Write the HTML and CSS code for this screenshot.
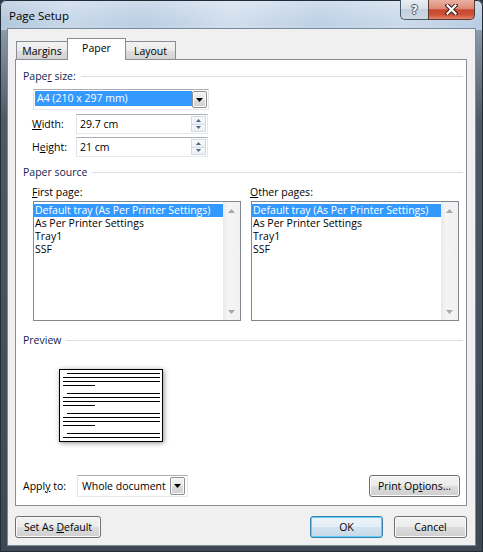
FILE: index.html
```html
<!DOCTYPE html>
<html lang="en">
<head>
<meta charset="utf-8">
<title>Page Setup</title>
<link rel="stylesheet" href="styles.css">
</head>
<body>
<div class="window">
  <div class="titlebar">
    <span class="title">Page Setup</span>
    <div class="caption-btns">
      <div class="cbtn help"><span class="qmark">?</span></div>
      <div class="cbtn close">
        <svg width="13" height="11" viewBox="0 0 13 11"><path d="M2.5 1.5 L10.5 9.5 M10.5 1.5 L2.5 9.5" stroke="#3b1f1a" stroke-width="4.2" stroke-linecap="square" fill="none"/><path d="M2.5 1.5 L10.5 9.5 M10.5 1.5 L2.5 9.5" stroke="#ffffff" stroke-width="2.2" stroke-linecap="square" fill="none"/></svg>
      </div>
    </div>
  </div>
  <div class="client">
    <div class="tabs">
      <div class="tab first">Margins</div>
      <div class="tab active">Paper</div>
      <div class="tab last">Layout</div>
    </div>
    <div class="panel">
      <div class="group-head"><span>Pape<u>r</u> size:</span><i class="rule"></i></div>
      <div class="size-block">
        <div class="combo size-combo">
          <span class="combo-value selected">A4 (210 x 297 mm)</span>
          <span class="dd-btn"><svg width="7" height="4" viewBox="0 0 7 4"><polygon points="0,0 7,0 3.5,4" fill="#000"/></svg></span>
        </div>
        <div class="field-row">
          <span class="field-label"><u>W</u>idth:</span>
          <div class="spin-box">
            <span class="spin-value">29.7 cm</span>
            <span class="spin-btns">
              <span class="spin-half"><svg width="5" height="3" viewBox="0 0 5 3"><polygon points="0,3 5,3 2.5,0" fill="#4d6489"/></svg></span>
              <span class="spin-half"><svg width="5" height="3" viewBox="0 0 5 3"><polygon points="0,0 5,0 2.5,3" fill="#4d6489"/></svg></span>
            </span>
          </div>
        </div>
        <div class="field-row second">
          <span class="field-label">H<u>e</u>ight:</span>
          <div class="spin-box">
            <span class="spin-value">21 cm</span>
            <span class="spin-btns">
              <span class="spin-half"><svg width="5" height="3" viewBox="0 0 5 3"><polygon points="0,3 5,3 2.5,0" fill="#4d6489"/></svg></span>
              <span class="spin-half"><svg width="5" height="3" viewBox="0 0 5 3"><polygon points="0,0 5,0 2.5,3" fill="#4d6489"/></svg></span>
            </span>
          </div>
        </div>
      </div>

      <div class="group-head source-head"><span>Paper source</span><i class="rule"></i></div>
      <div class="sources">
        <div class="source-col">
          <span class="list-label"><u>F</u>irst page:</span>
          <div class="listbox">
            <div class="list-items">
              <div class="item selected">Default tray (As Per Printer Settings)</div>
              <div class="item">As Per Printer Settings</div>
              <div class="item">Tray1</div>
              <div class="item">SSF</div>
            </div>
            <div class="vscroll">
              <span class="sarrow"><svg width="7" height="4" viewBox="0 0 7 4"><polygon points="0,4 7,4 3.5,0" fill="#a7a7a7"/></svg></span>
              <span class="sarrow"><svg width="7" height="4" viewBox="0 0 7 4"><polygon points="0,0 7,0 3.5,4" fill="#a7a7a7"/></svg></span>
            </div>
          </div>
        </div>
        <div class="source-col">
          <span class="list-label"><u>O</u>ther pages:</span>
          <div class="listbox">
            <div class="list-items">
              <div class="item selected">Default tray (As Per Printer Settings)</div>
              <div class="item">As Per Printer Settings</div>
              <div class="item">Tray1</div>
              <div class="item">SSF</div>
            </div>
            <div class="vscroll">
              <span class="sarrow"><svg width="7" height="4" viewBox="0 0 7 4"><polygon points="0,4 7,4 3.5,0" fill="#a7a7a7"/></svg></span>
              <span class="sarrow"><svg width="7" height="4" viewBox="0 0 7 4"><polygon points="0,0 7,0 3.5,4" fill="#a7a7a7"/></svg></span>
            </div>
          </div>
        </div>
      </div>

      <div class="group-head preview-head"><span>Preview</span><i class="rule"></i></div>
      <div class="preview-page">
        <div class="para"><i class="ln indent"></i><i class="ln"></i><i class="ln"></i><i class="ln short"></i></div>
        <div class="para"><i class="ln indent"></i><i class="ln"></i><i class="ln"></i><i class="ln short"></i></div>
        <div class="para"><i class="ln indent"></i><i class="ln"></i><i class="ln"></i><i class="ln short"></i></div>
        <div class="para"><i class="ln indent"></i><i class="ln"></i></div>
      </div>

      <div class="apply-row">
        <span class="apply-label">Appl<u>y</u> to:</span>
        <div class="combo apply-combo">
          <span class="combo-value">Whole document</span>
          <span class="dd-btn"><svg width="7" height="4" viewBox="0 0 7 4"><polygon points="0,0 7,0 3.5,4" fill="#000"/></svg></span>
        </div>
        <button class="btn print-btn"><span>Print Op<u>t</u>ions...</span></button>
      </div>
    </div>
    <div class="footer">
      <button class="btn default-btn"><span>Set As <u>D</u>efault</span></button>
      <div class="footer-right">
        <button class="btn ok-btn"><span>OK</span></button>
        <button class="btn"><span>Cancel</span></button>
      </div>
    </div>
  </div>
</div>
</body>
</html>
```

FILE: styles.css
```css
* { box-sizing: border-box; margin: 0; padding: 0; }
html, body { width: 483px; height: 552px; overflow: hidden; background: #2b3642; }
body {
  font-family: "Open Sans", "Liberation Sans", sans-serif;
  font-size: 10.5px;
  color: #000;
}
u { text-decoration: underline; text-underline-offset: 1px; }

.window {
  width: 483px;
  height: 552px;
  display: flex;
  flex-direction: column;
  padding: 0 8px 7px 8px;
  border-radius: 6px 6px 0 0;
  background:
    linear-gradient(180deg, rgba(255,255,255,0.28), rgba(255,255,255,0) 70%) top left / 100% 30px no-repeat,
    linear-gradient(90deg, #b3c7dc 0%, #c8d8ea 14%, #bccfe4 30%, #d2dfee 48%, #bfd2e6 66%, #ccdbeb 84%, #b9cde2 100%) top left / 100% 30px no-repeat,
    linear-gradient(180deg, #a9bacb 0px, #7f8e9d 45px, #4d5965 120px, #3d4854 100%);
  box-shadow: inset 0 0 0 1px #222c36;
}

.titlebar {
  height: 29px;
  display: flex;
  justify-content: space-between;
  align-items: flex-start;
  flex-shrink: 0;
}
.title {
  margin-top: 8px;
  margin-left: 1px;
  font-size: 11.5px;
  line-height: 16px;
  color: #000;
}
.caption-btns { display: flex; }
.cbtn {
  height: 20px;
  display: flex;
  align-items: center;
  justify-content: center;
  border: 1px solid #4a5a6b;
  border-top: none;
}
.help {
  width: 28px;
  border-right: none;
  border-radius: 0 0 0 5px;
  background: linear-gradient(180deg, #e7edf3 0%, #d8e1ea 45%, #c3cfdb 50%, #cdd8e3 100%);
}
.qmark {
  font-family: "DejaVu Sans", sans-serif;
  font-weight: bold;
  font-size: 12px;
  line-height: 12px;
  color: #f4f6f8;
  text-shadow: 1px 0 0 #4b5866, -1px 0 0 #4b5866, 0 1px 0 #4b5866, 0 -1px 0 #4b5866;
}
.close {
  width: 47px;
  border-color: #5a3a34;
  border-radius: 0 0 5px 0;
  background: linear-gradient(180deg, #eab0a2 0%, #dc8a77 45%, #c8462f 52%, #cf5138 78%, #e58666 100%);
}

.client {
  flex: 1;
  display: flex;
  flex-direction: column;
  background: #f0f0f0;
  padding: 9px 8px 7px 7px;
  box-shadow: 0 0 0 1px #7c8a98;
}

.tabs {
  display: flex;
  align-items: flex-end;
  height: 21px;
  padding-left: 1px;
  position: relative;
  z-index: 2;
}
.tab {
  height: 18px;
  border: 1px solid #898c95;
  border-bottom: none;
  background: linear-gradient(180deg, #f3f3f3 0%, #ebebeb 50%, #dedede 51%, #d3d3d3 100%);
  display: flex;
  align-items: center;
  justify-content: center;
  line-height: 14px;
}
.tab.first { width: 52px; }
.tab.active {
  width: 59px;
  height: 22px;
  margin: 0 -1px -1px -1px;
  background: #fff;
  position: relative;
  z-index: 3;
  padding-bottom: 3px;
}
.tab.last { width: 51px; }

.panel {
  width: 452px;
  height: 447px;
  border: 1px solid #898c95;
  background: #fff;
  padding: 8px 3px 8px 7px;
  display: flex;
  flex-direction: column;
  position: relative;
  z-index: 1;
}

.group-head {
  display: flex;
  align-items: center;
  height: 16px;
  line-height: 16px;
  color: #131c52;
  white-space: nowrap;
}
.rule {
  flex: 1;
  height: 1px;
  margin-left: 5px;
  background: #d5dfe5;
}

.size-block {
  margin-left: 10px;
  margin-top: 5px;
  display: flex;
  flex-direction: column;
}

.combo {
  display: flex;
  align-items: stretch;
  border: 1px solid #abadb3;
  border-right-color: #e3e9ef;
  border-bottom-color: #e3e9ef;
  border-left-color: #e2e3ea;
  background: #fff;
  padding: 1px;
}
.size-combo { width: 176px; height: 21px; }
.combo-value {
  flex: 1;
  line-height: 15px;
  padding-left: 2px;
  white-space: nowrap;
}
.combo-value.selected {
  background: #3399ff;
  color: #fff;
  margin-bottom: 2px;
}
.dd-btn {
  width: 15px;
  display: flex;
  align-items: center;
  justify-content: center;
  border: 1px solid #8e8f8f;
  border-radius: 2px;
  background: linear-gradient(180deg, #f2f2f2 0%, #ebebeb 50%, #dddddd 51%, #cfcfcf 100%);
  box-shadow: inset 0 0 0 1px #fbfbfb;
}

.field-row {
  display: flex;
  align-items: center;
  margin-top: 4px;
}
.field-row.second { margin-top: 3px; }
.field-label { width: 44px; margin-left: -1px; padding-right: 1px; }
.spin-box {
  width: 132px;
  height: 20px;
  display: flex;
  border: 1px solid #abadb3;
  border-right-color: #e3e9ef;
  border-bottom-color: #e3e9ef;
  border-left-color: #e2e3ea;
  background: #fff;
  padding: 1px;
}
.spin-value { flex: 1; line-height: 16px; padding-left: 2px; }
.spin-btns {
  width: 15px;
  display: flex;
  flex-direction: column;
}
.spin-half {
  flex: 1;
  display: flex;
  align-items: center;
  justify-content: center;
  border: 1px solid #d4dae2;
  background: linear-gradient(180deg, #f8f9fb, #eceff3);
}
.spin-half + .spin-half { border-top: none; }

.source-head { margin-top: 7px; }
.sources {
  display: flex;
  gap: 10px;
  margin-left: 10px;
  margin-top: 4px;
}
.source-col { display: flex; flex-direction: column; width: 208px; }
.list-label { line-height: 16px; margin-left: -1px; }
.listbox {
  margin-top: 1px;
  height: 120px;
  border: 1px solid #828790;
  display: flex;
  background: #fff;
}
.list-items { flex: 1; padding-top: 2px; overflow: hidden; }
.item {
  height: 13px;
  line-height: 13px;
  padding-left: 1px;
  white-space: nowrap;
}
.item.selected { background: #3399ff; color: #fff; }
.vscroll {
  width: 17px;
  display: flex;
  flex-direction: column;
  justify-content: space-between;
  background: linear-gradient(90deg, #e9e9e9, #f4f4f4 30%, #f1f1f1);
}
.sarrow {
  height: 17px;
  display: flex;
  align-items: center;
  justify-content: center;
}

.preview-head { margin-top: 11px; }
.preview-page {
  width: 104px;
  height: 73px;
  margin-left: 36px;
  margin-top: 21px;
  border: 1px solid #000;
  background: #fff;
  box-shadow: 1px 1px 5px rgba(0,0,0,0.45);
  padding: 3px 2px 0 3px;
  display: flex;
  flex-direction: column;
  gap: 7px;
}
.para { display: flex; flex-direction: column; gap: 3px; }
.ln { display: block; height: 1px; background: #000; }
.ln.indent { margin-left: 4px; }
.ln.short { width: 32px; }

.apply-row {
  margin-top: auto;
  height: 22px;
  display: flex;
  align-items: center;
}
.apply-label { width: 54px; }
.apply-combo { width: 111px; height: 22px; padding: 1px 2px 1px 1px; }
.apply-combo .combo-value { line-height: 18px; padding-left: 3px; }
.apply-combo .dd-btn { width: 15px; }

.btn {
  font-family: inherit;
  font-size: inherit;
  color: #000;
  height: 22px;
  border: 1px solid #707070;
  border-radius: 3px;
  background: linear-gradient(180deg, #f2f2f2 0%, #ebebeb 50%, #dddddd 51%, #cfcfcf 100%);
  box-shadow: inset 0 0 0 1px #fbfbfb;
  display: flex;
  align-items: center;
  justify-content: center;
  width: 73px;
  line-height: 14px;
  white-space: nowrap;
}
.print-btn { width: 91px; margin-left: auto; margin-right: 3px; height: 22px; }

.footer {
  margin-top: 10px;
  height: 22px;
  display: flex;
  justify-content: space-between;
}
.default-btn { width: 86px; }
.footer-right { display: flex; gap: 11px; }
.ok-btn {
  border-color: #3c7fb1;
  background: linear-gradient(180deg, #eef5fa 0%, #e4eef6 50%, #d3e3ef 51%, #c6d9e8 100%);
  box-shadow: inset 0 0 0 1px #5ed0f3;
}
```
